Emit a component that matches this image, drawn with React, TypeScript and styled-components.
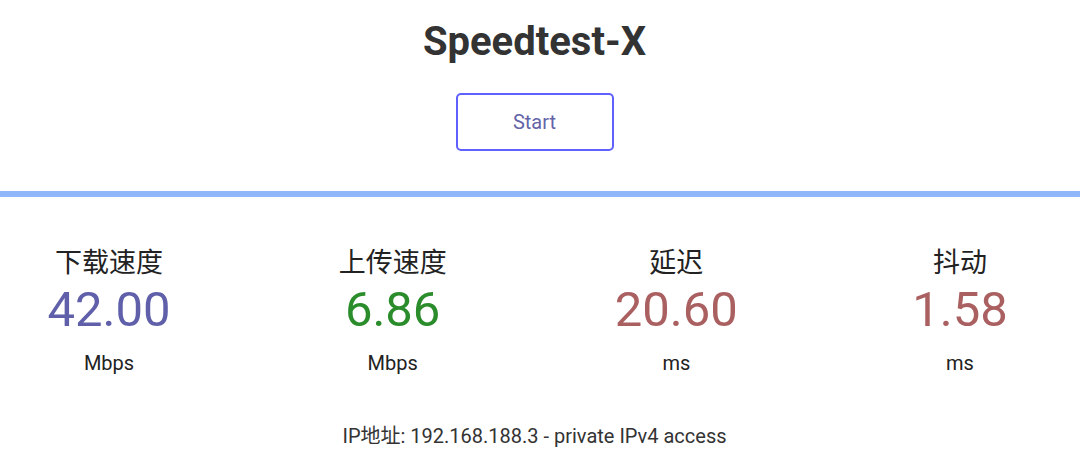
import styled, { createGlobalStyle } from 'styled-components';

const GlobalStyle = createGlobalStyle`
  html, body {
    margin: 0;
    padding: 0;
    background: #fff;
    font-family: Roboto, "Noto Sans CJK SC", sans-serif;
  }
`;

const Page = styled.div`
  display: flex;
  flex-direction: column;
  align-items: center;
  width: 1069px;
  padding-right: 11px;
`;

const Title = styled.h1`
  margin: 17px 0 0;
  font-size: 40px;
  font-weight: 700;
  line-height: 50px;
  color: #333;
`;

const StartButton = styled.button`
  margin-top: 26px;
  width: 158px;
  height: 58px;
  border: 2px solid #6060ff;
  border-radius: 5px;
  background: #fff;
  color: #6464a8;
  font-family: Roboto, sans-serif;
  font-size: 20px;
  cursor: pointer;
`;

const Divider = styled.div`
  align-self: stretch;
  margin: 40px -11px 0 0;
  height: 6px;
  background: #8fb6f8;
`;

const Stats = styled.div`
  align-self: stretch;
  display: flex;
  justify-content: space-between;
  padding-top: 47px;
`;

const Stat = styled.div`
  width: 218px;
  display: flex;
  flex-direction: column;
  align-items: center;
`;

const Label = styled.div`
  font-family: "Noto Sans CJK SC", sans-serif;
  font-size: 27px;
  line-height: 34px;
  color: #222;
`;

const Value = styled.div<{ $color: string }>`
  margin-top: 4px;
  font-size: 49px;
  line-height: 56px;
  color: ${({ $color }) => $color};
`;

const Unit = styled.div`
  margin-top: 12px;
  font-size: 20px;
  line-height: 26px;
  color: #222;
`;

const IpInfo = styled.div`
  margin-top: 47px;
  font-family: Roboto, "Noto Sans CJK SC", sans-serif;
  font-size: 20px;
  line-height: 26px;
  color: #333;
`;

const stats = [
  { label: '下载速度', value: '42.00', unit: 'Mbps', color: '#6060aa' },
  { label: '上传速度', value: '6.86', unit: 'Mbps', color: '#2a8c2a' },
  { label: '延迟', value: '20.60', unit: 'ms', color: '#aa6060' },
  { label: '抖动', value: '1.58', unit: 'ms', color: '#aa6060' },
];

export default function App() {
  return (
    <>
      <GlobalStyle />
      <Page>
        <Title>Speedtest-X</Title>
        <StartButton>Start</StartButton>
        <Divider />
        <Stats>
          {stats.map((s) => (
            <Stat key={s.label}>
              <Label>{s.label}</Label>
              <Value $color={s.color}>{s.value}</Value>
              <Unit>{s.unit}</Unit>
            </Stat>
          ))}
        </Stats>
        <IpInfo>IP地址: 192.168.188.3 - private IPv4 access</IpInfo>
      </Page>
    </>
  );
}
